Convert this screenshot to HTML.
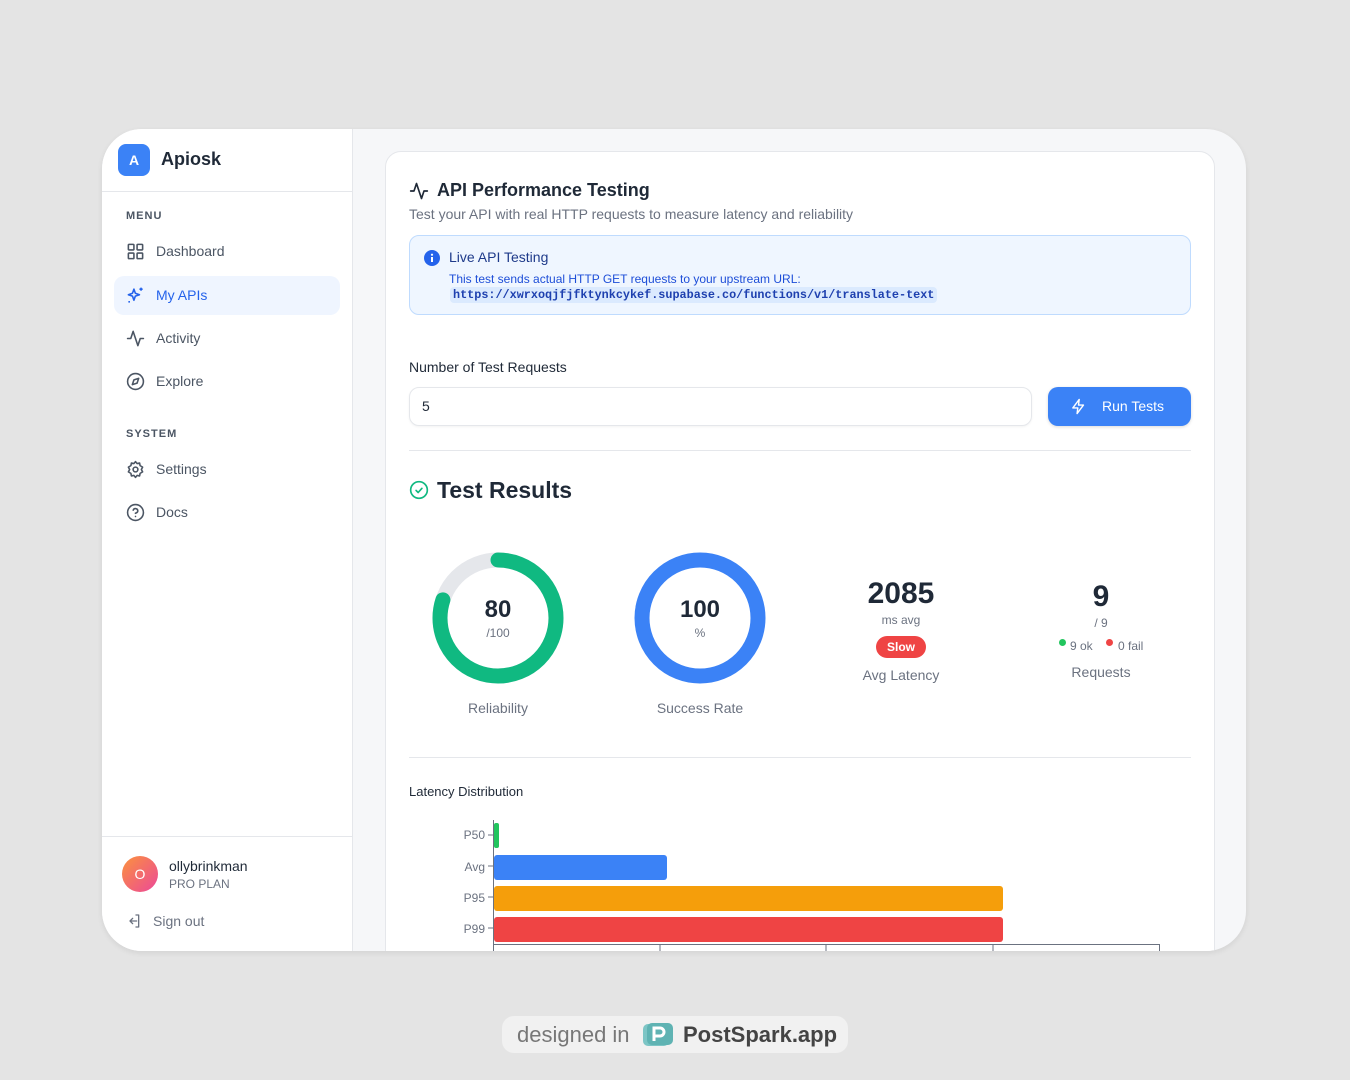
<!DOCTYPE html>
<html><head><meta charset="utf-8">
<style>
*{box-sizing:border-box;margin:0;padding:0}
body{width:1350px;height:1080px;background:#e4e4e4;font-family:"Liberation Sans",sans-serif;position:relative;overflow:hidden;color:#1f2937}
.frame{position:absolute;left:102px;top:129px;width:1144px;height:822px;border-radius:40px;background:#f6f7f9;overflow:hidden;box-shadow:0 2px 6px rgba(0,0,0,.08)}
.side{position:absolute;left:0;top:0;width:251px;height:822px;background:#fff;border-right:1px solid #e5e7eb}
.logo{position:absolute;left:16px;top:15px;width:32px;height:32px;border-radius:8px;background:#3b82f6;color:#fff;font-weight:bold;font-size:14px;text-align:center;line-height:32px}
.brand{position:absolute;left:59px;top:20px;font-size:18px;font-weight:bold;color:#1f2937}
.hr{position:absolute;left:0;width:250px;height:1px;background:#e5e7eb}
.sec{position:absolute;left:24px;font-size:11px;letter-spacing:1px;color:#4b5563;font-weight:bold}
.item{position:absolute;left:12px;width:226px;height:39px;border-radius:10px;font-size:14px;color:#4b5563;line-height:39px;padding-left:42px}
.item svg{position:absolute;left:12px;top:10px}
.item.act{background:#eff5ff;color:#2563eb}
.card{position:absolute;left:283px;top:22px;width:830px;height:850px;background:#fff;border:1px solid #e5e7eb;border-radius:16px}
.abs{position:absolute}
</style></head><body>
<div class="frame">
 <div class="side">
  <div class="logo">A</div><div class="brand">Apiosk</div>
  <div class="hr" style="top:62px"></div>
  <div class="sec" style="top:81px">MENU</div>
  <div class="item" style="top:103px"><svg width="19" height="19" viewBox="0 0 24 24" fill="none" stroke="#4b5563" stroke-width="2"><rect x="3" y="3" width="7" height="7" rx="1"/><rect x="14" y="3" width="7" height="7" rx="1"/><rect x="3" y="14" width="7" height="7" rx="1"/><rect x="14" y="14" width="7" height="7" rx="1"/></svg>Dashboard</div>
  <div class="item act" style="top:147px"><svg width="19" height="19" viewBox="0 0 24 24" fill="none" stroke="#2563eb" stroke-width="2" stroke-linejoin="round"><path d="M10 4l1.8 5.2L17 11l-5.2 1.8L10 18l-1.8-5.2L3 11l5.2-1.8z"/><path d="M19 2v4M17 4h4M4 19v2M3 20h2"/></svg>My APIs</div>
  <div class="item" style="top:190px"><svg width="19" height="19" viewBox="0 0 24 24" fill="none" stroke="#4b5563" stroke-width="2" stroke-linecap="round" stroke-linejoin="round"><path d="M22 12h-4l-3 9L9 3l-3 9H2"/></svg>Activity</div>
  <div class="item" style="top:233px"><svg width="19" height="19" viewBox="0 0 24 24" fill="none" stroke="#4b5563" stroke-width="2" stroke-linejoin="round"><circle cx="12" cy="12" r="10"/><path d="M16 8l-2 6-6 2 2-6z"/></svg>Explore</div>
  <div class="sec" style="top:299px">SYSTEM</div>
  <div class="item" style="top:321px"><svg width="19" height="19" viewBox="0 0 24 24" fill="none" stroke="#4b5563" stroke-width="2" stroke-linejoin="round"><path d="M12 2l2 2.5 3.2-.6.6 3.2L21 9l-1.6 3 1.6 3-3.2 1.9-.6 3.2-3.2-.6L12 22l-2-2.5-3.2.6-.6-3.2L3 15l1.6-3L3 9l3.2-1.9.6-3.2 3.2.6z"/><circle cx="12" cy="12" r="3"/></svg>Settings</div>
  <div class="item" style="top:364px"><svg width="19" height="19" viewBox="0 0 24 24" fill="none" stroke="#4b5563" stroke-width="2" stroke-linecap="round"><circle cx="12" cy="12" r="10"/><path d="M9.1 9a3 3 0 015.8 1c0 2-3 3-3 3"/><path d="M12 17h.01"/></svg>Docs</div>
  <div class="hr" style="top:707px"></div>
  <div class="abs" style="left:20px;top:727px;width:36px;height:36px;border-radius:50%;background:linear-gradient(135deg,#fb923c,#ec4899);color:#fff;text-align:center;line-height:36px;font-size:14px">O</div>
  <div class="abs" style="left:67px;top:729px;font-size:14px;color:#1f2937">ollybrinkman</div>
  <div class="abs" style="left:67px;top:748px;font-size:12px;color:#6b7280">PRO PLAN</div>
  <svg class="abs" style="left:24px;top:784px" width="16" height="16" viewBox="0 0 24 24" fill="none" stroke="#6b7280" stroke-width="2" stroke-linecap="round" stroke-linejoin="round"><path d="M15 3h4v18h-4M10 8l-4 4 4 4M6 12h10"/></svg>
  <div class="abs" style="left:51px;top:784px;font-size:14px;color:#6b7280">Sign out</div>
 </div>
 <div class="card">
  <svg class="abs" style="left:23px;top:29px" width="20" height="20" viewBox="0 0 24 24" fill="none" stroke="#1f2937" stroke-width="2" stroke-linecap="round" stroke-linejoin="round"><path d="M22 12h-4l-3 9L9 3l-3 9H2"/></svg>
  <div class="abs" style="left:51px;top:28px;font-size:18px;font-weight:bold;color:#1f2937">API Performance Testing</div>
  <div class="abs" style="left:23px;top:54px;font-size:14px;color:#6b7280">Test your API with real HTTP requests to measure latency and reliability</div>
  <div class="abs" style="left:23px;top:83px;width:782px;height:80px;background:#eff6ff;border:1px solid #bfdbfe;border-radius:10px">
   <svg class="abs" style="left:14px;top:14px" width="16" height="16" viewBox="0 0 16 16"><circle cx="8" cy="8" r="8" fill="#2563eb"/><rect x="7" y="7" width="2" height="5" fill="#fff"/><circle cx="8" cy="4.7" r="1.1" fill="#fff"/></svg>
   <div class="abs" style="left:39px;top:13px;font-size:14px;color:#1e3a8a">Live API Testing</div>
   <div class="abs" style="left:39px;top:36px;font-size:12px;color:#1d4ed8">This test sends actual HTTP GET requests to your upstream URL:</div>
   <div class="abs" style="left:40px;top:51px;padding:1px 3px;background:#dbeafe;border-radius:4px;font-family:'Liberation Mono',monospace;font-size:11.8px;font-weight:bold;color:#1e40af">https://xwrxoqjfjfktynkcykef.supabase.co/functions/v1/translate-text</div>
  </div>
  <div class="abs" style="left:23px;top:207px;font-size:14px;color:#1f2937">Number of Test Requests</div>
  <div class="abs" style="left:23px;top:235px;width:623px;height:39px;border:1px solid #e5e7eb;border-radius:10px;font-size:14px;line-height:37px;padding-left:12px;box-shadow:0 1px 2px rgba(0,0,0,.05)">5</div>
  <div class="abs" style="left:662px;top:235px;width:143px;height:39px;background:#3b82f6;border-radius:10px;color:#fff;font-size:14px;line-height:39px;padding-left:54px;box-shadow:0 1px 3px rgba(0,0,0,.15)"><svg class="abs" style="left:22px;top:11px" width="17" height="17" viewBox="0 0 24 24" fill="none" stroke="#fff" stroke-width="2" stroke-linejoin="round"><path d="M13 2L4 14h7l-1 8 9-12h-7z"/></svg>Run Tests</div>
  <div class="abs" style="left:23px;top:298px;width:782px;height:1px;background:#e5e7eb"></div>
  <svg class="abs" style="left:23px;top:328px" width="20" height="20" viewBox="0 0 24 24" fill="none" stroke="#10b981" stroke-width="2" stroke-linecap="round" stroke-linejoin="round"><circle cx="12" cy="12" r="10"/><path d="M8.5 12.5l2.5 2.5 4.5-5"/></svg>
  <div class="abs" style="left:51px;top:325px;font-size:23px;font-weight:bold;color:#1f2937">Test Results</div>
  <svg class="abs" style="left:46px;top:400px" width="132" height="132" viewBox="0 0 132 132"><circle cx="66" cy="66" r="58" fill="none" stroke="#e5e7eb" stroke-width="15"/><circle cx="66" cy="66" r="58" fill="none" stroke="#10b981" stroke-width="15" stroke-linecap="round" stroke-dasharray="291.5 364.4" transform="rotate(-90 66 66)"/></svg>
  <div class="abs" style="left:62px;top:444px;width:100px;text-align:center;font-size:24px;font-weight:bold;color:#1f2937">80</div>
  <div class="abs" style="left:62px;top:474px;width:100px;text-align:center;font-size:12px;color:#6b7280">/100</div>
  <div class="abs" style="left:62px;top:548px;width:100px;text-align:center;font-size:14px;color:#6b7280">Reliability</div>
  <svg class="abs" style="left:248px;top:400px" width="132" height="132" viewBox="0 0 132 132"><circle cx="66" cy="66" r="58" fill="none" stroke="#3b82f6" stroke-width="15"/></svg>
  <div class="abs" style="left:264px;top:444px;width:100px;text-align:center;font-size:24px;font-weight:bold;color:#1f2937">100</div>
  <div class="abs" style="left:264px;top:474px;width:100px;text-align:center;font-size:12px;color:#6b7280">%</div>
  <div class="abs" style="left:244px;top:548px;width:140px;text-align:center;font-size:14px;color:#6b7280">Success Rate</div>
  <div class="abs" style="left:455px;top:425px;width:120px;text-align:center;font-size:30px;font-weight:bold;color:#1f2937">2085</div>
  <div class="abs" style="left:455px;top:461px;width:120px;text-align:center;font-size:12px;color:#6b7280">ms avg</div>
  <div class="abs" style="left:490px;top:484px;width:50px;height:22px;border-radius:11px;background:#ef4444;color:#fff;font-size:12px;font-weight:bold;text-align:center;line-height:22px">Slow</div>
  <div class="abs" style="left:455px;top:515px;width:120px;text-align:center;font-size:14px;color:#6b7280">Avg Latency</div>
  <div class="abs" style="left:655px;top:428px;width:120px;text-align:center;font-size:30px;font-weight:bold;color:#1f2937">9</div>
  <div class="abs" style="left:655px;top:464px;width:120px;text-align:center;font-size:12px;color:#6b7280">/ 9</div>
  <div class="abs" style="left:673px;top:487px;width:7px;height:7px;border-radius:50%;background:#22c55e"></div>
  <div class="abs" style="left:684px;top:487px;font-size:12px;color:#6b7280">9 ok</div>
  <div class="abs" style="left:720px;top:487px;width:7px;height:7px;border-radius:50%;background:#ef4444"></div>
  <div class="abs" style="left:732px;top:487px;font-size:12px;color:#6b7280">0 fail</div>
  <div class="abs" style="left:655px;top:512px;width:120px;text-align:center;font-size:14px;color:#6b7280">Requests</div>
  <div class="abs" style="left:23px;top:605px;width:782px;height:1px;background:#e5e7eb"></div>
  <div class="abs" style="left:23px;top:632px;font-size:13px;color:#1f2937">Latency Distribution</div>
  <svg class="abs" style="left:50px;top:664px" width="730" height="140" viewBox="0 0 730 140">
   <g font-family="Liberation Sans,sans-serif" font-size="12" fill="#6b7280" text-anchor="end">
    <text x="49" y="23">P50</text><text x="49" y="55">Avg</text><text x="49" y="86">P95</text><text x="49" y="117">P99</text>
   </g>
   <g stroke="#6b7280" stroke-width="1"><path d="M57.5 4v124M52 19h5M52 50h5M52 81h5M52 112h5M57.5 128.5h666M57.5 128v10M224 128v10M390 128v10M557 128v10M723.5 128v10"/></g>
   <rect x="58" y="7" width="5" height="25" rx="2" fill="#22c55e"/>
   <rect x="58" y="39" width="173" height="25" rx="3" fill="#3b82f6"/>
   <rect x="58" y="70" width="509" height="25" rx="3" fill="#f59e0b"/>
   <rect x="58" y="101" width="509" height="25" rx="3" fill="#ef4444"/>
  </svg>
 </div>
</div>
<div class="abs" style="left:502px;top:1016px;width:346px;height:37px;border-radius:12px;background:#f1f1f1"></div>
<div class="abs" style="left:517px;top:1022px;font-size:22px;color:#777">designed in</div>
<svg class="abs" style="left:642px;top:1022px" width="32" height="26" viewBox="0 0 32 26"><rect x="1" y="2" width="26" height="22" rx="5" fill="#7cc5c5"/><rect x="5" y="1" width="26" height="22" rx="5" fill="#5fb3b3"/><path d="M12 19V6h6a4 4 0 010 8h-6" fill="none" stroke="#fff" stroke-width="3"/></svg>
<div class="abs" style="left:683px;top:1022px;font-size:22px;color:#444;font-weight:bold">PostSpark.app</div>
</body></html>
